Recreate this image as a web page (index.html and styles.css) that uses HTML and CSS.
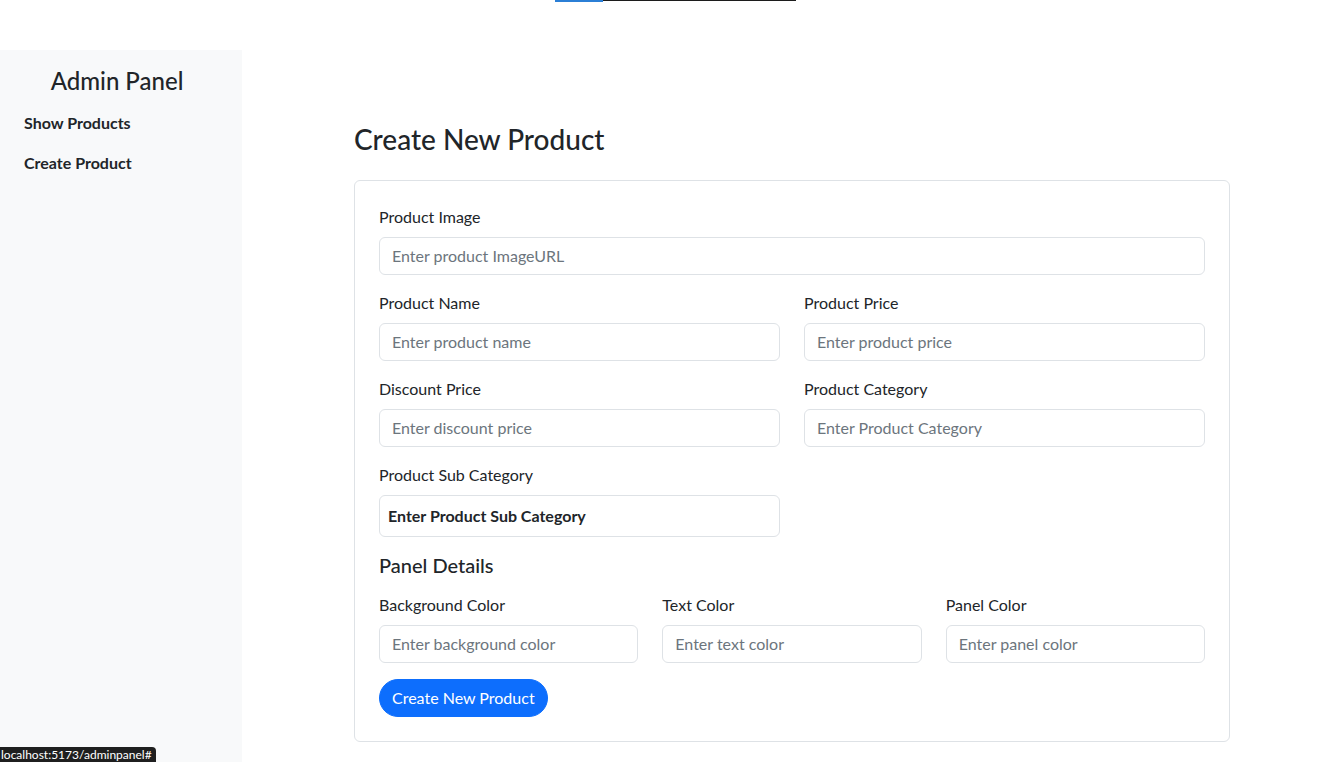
FILE: index.html
```html
<!DOCTYPE html>
<html lang="en">
<head>
<meta charset="utf-8">
<title>Admin Panel</title>
<link rel="stylesheet" href="styles.css">
</head>
<body>
<div class="topbar">
  <div class="topline"><span class="topline-blue"></span></div>
</div>
<div class="layout">
  <aside class="sidebar">
    <h4 class="sidebar-title">Admin Panel</h4>
    <nav class="sidebar-nav">
      <a class="nav-link" href="#">Show Products</a>
      <a class="nav-link" href="#">Create Product</a>
    </nav>
  </aside>
  <main class="main">
    <div class="container">
      <h3 class="page-title">Create New Product</h3>
      <form class="card">
        <div class="group">
          <label class="form-label">Product Image</label>
          <input class="form-control" type="text" placeholder="Enter product ImageURL">
        </div>
        <div class="row two">
          <div class="group">
            <label class="form-label">Product Name</label>
            <input class="form-control" type="text" placeholder="Enter product name">
          </div>
          <div class="group">
            <label class="form-label">Product Price</label>
            <input class="form-control" type="text" placeholder="Enter product price">
          </div>
        </div>
        <div class="row two">
          <div class="group">
            <label class="form-label">Discount Price</label>
            <input class="form-control" type="text" placeholder="Enter discount price">
          </div>
          <div class="group">
            <label class="form-label">Product Category</label>
            <input class="form-control" type="text" placeholder="Enter Product Category">
          </div>
        </div>
        <div class="row two">
          <div class="group">
            <label class="form-label">Product Sub Category</label>
            <div class="form-select">Enter Product Sub Category</div>
          </div>
        </div>
        <h5 class="section-title">Panel Details</h5>
        <div class="row three">
          <div class="group">
            <label class="form-label">Background Color</label>
            <input class="form-control" type="text" placeholder="Enter background color">
          </div>
          <div class="group">
            <label class="form-label">Text Color</label>
            <input class="form-control" type="text" placeholder="Enter text color">
          </div>
          <div class="group">
            <label class="form-label">Panel Color</label>
            <input class="form-control" type="text" placeholder="Enter panel color">
          </div>
        </div>
        <div class="actions">
          <button class="btn-primary" type="button">Create New Product</button>
        </div>
      </form>
    </div>
  </main>
</div>
<div class="status-bubble"><span class="status-text">localhost:5173/adminpanel#</span></div>
</body>
</html>
```

FILE: styles.css
```css
* { box-sizing: border-box; }
html, body { height: 100%; }
body {
  margin: 0;
  font-family: Lato, "Open Sans", "Liberation Sans", sans-serif;
  font-size: 16px;
  line-height: 1.5;
  color: #212529;
  background: #fff;
  overflow: hidden;
}
.topbar {
  height: 50px;
}
.topline {
  margin-left: 555px;
  width: 241px;
  height: 1px;
  background: #1c1c1c;
  display: flex;
}
.topline-blue {
  width: 48px;
  height: 2px;
  background: #2b7fd6;
}
.layout {
  display: flex;
  min-height: 712px;
}
.sidebar {
  width: 242px;
  flex: 0 0 242px;
  background: #f8f9fa;
  padding: 17px 8px 0 8px;
}
.sidebar-title {
  margin: 0 8px 7px 0;
  text-align: center;
  font-size: 24px;
  font-weight: 500;
  line-height: 1.2;
}
.sidebar-nav {
  display: flex;
  flex-direction: column;
}
.nav-link {
  display: block;
  padding: 8px 16px;
  font-weight: 700;
  color: #212529;
  text-decoration: none;
  line-height: 24px;
}
.main {
  flex: 1;
  padding-top: 73px;
}
.container {
  width: 876px;
  margin-left: 112px;
}
.page-title {
  margin: 0 0 23px;
  font-size: 28px;
  font-weight: 500;
  line-height: 1.2;
}
.card {
  border: 1px solid #dee2e6;
  border-radius: 6px;
  padding: 24px;
}
.group {
  margin-bottom: 16px;
  min-width: 0;
}
.row {
  display: grid;
  column-gap: 24px;
}
.row.two { grid-template-columns: 1fr 1fr; }
.row.three { grid-template-columns: 1fr 1fr 1fr; }
.form-label {
  display: block;
  margin-bottom: 8px;
  line-height: 24px;
}
.form-control {
  display: block;
  width: 100%;
  height: 38px;
  padding: 6px 12px;
  font: inherit;
  font-size: 16px;
  line-height: 24px;
  color: #212529;
  background: #fff;
  border: 1px solid #dee2e6;
  border-radius: 6px;
  outline: none;
}
.form-control::placeholder { color: #6c757d; opacity: 1; }
.form-select {
  height: 42px;
  padding: 8px 8px;
  font-weight: 700;
  line-height: 24px;
  border: 1px solid #dee2e6;
  border-radius: 6px;
  background: #fff;
}
.section-title {
  margin: 0 0 16px;
  font-size: 20px;
  font-weight: 500;
  line-height: 1.2;
}
.actions { display: flex; }
.btn-primary {
  height: 38px;
  padding: 6px 12px;
  font: inherit;
  font-size: 16px;
  line-height: 24px;
  color: #fff;
  background: #0d6efd;
  border: 1px solid #0d6efd;
  border-radius: 50rem;
  cursor: pointer;
}
.status-bubble {
  position: absolute;
  left: 0;
  bottom: 0;
  height: 15px;
  padding: 0 4px 0 1px;
  background: #1f1f1f;
  border-top-right-radius: 4px;
  white-space: nowrap;
}
.status-text {
  display: block;
  font-size: 12px;
  line-height: 15px;
  color: #fff;
}
```
